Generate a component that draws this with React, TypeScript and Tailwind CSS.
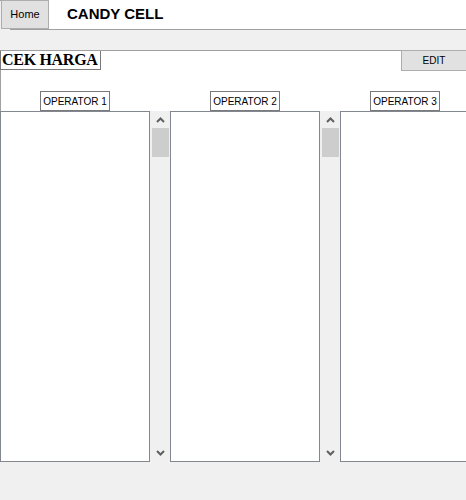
const Chevron = ({ up }: { up?: boolean }) => (
  <svg width="9" height="6" viewBox="0 0 9 6" className="block">
    {up ? (
      <path d="M1 5 L4.5 1.5 L8 5" fill="none" stroke="#606060" strokeWidth="2" />
    ) : (
      <path d="M1 1 L4.5 4.5 L8 1" fill="none" stroke="#606060" strokeWidth="2" />
    )}
  </svg>
)

function OperatorColumn({ label, last }: { label: string; last?: boolean }) {
  return (
    <div className={last ? 'flex-1 flex flex-col min-w-0' : 'w-[170px] flex flex-col shrink-0'}>
      {/* label */}
      <div className={last ? 'h-[60px] flex items-end pl-[30px]' : 'h-[60px] flex items-end justify-center pr-[20px]'}>
        <div className="w-[70px] h-[20px] border border-[#7a7a7a] bg-white flex items-center justify-center text-[10px] text-black">
          {label}
        </div>
      </div>
      {/* list + scrollbar */}
      <div className="flex h-[351px]">
        <div className={last ? 'flex-1 border border-r-0 border-[#828790] bg-white' : 'w-[150px] border border-[#828790] bg-white'} />
        {!last && (
          <div className="w-[20px] bg-[#f0f0f0] flex flex-col items-center">
            <div className="h-[17px] flex items-center justify-center pt-[1px]">
              <Chevron up />
            </div>
            <div className="w-[17px] h-[29px] bg-[#cdcdcd]" />
            <div className="flex-1" />
            <div className="h-[17px] flex items-center justify-center pb-[1px]">
              <Chevron />
            </div>
          </div>
        )}
      </div>
    </div>
  )
}

export default function App() {
  return (
    <div
      className="w-[466px] h-[500px] bg-[#f0f0f0] overflow-hidden"
      style={{ fontFamily: '"Liberation Sans", Arial, sans-serif' }}
    >
      {/* top bar */}
      <div className="flex h-[30px]">
        <div className="w-[10px] border-t border-[#a0a0a0]" />
        <div className="flex-1 bg-white border-b border-[#a0a0a0] flex items-start">
          <button className="-ml-[9px] w-[48px] h-[29px] bg-[#e1e1e1] border border-[#adadad] text-[11px] text-black flex items-center justify-center">
            Home
          </button>
          <span className="ml-[18px] mt-[6px] text-[15px] font-bold text-black leading-none">CANDY CELL</span>
        </div>
      </div>

      <div className="h-[20px]" />

      {/* main panel */}
      <div className="bg-white border-t border-l border-[#a0a0a0] h-[411px]">
        <div className="flex justify-between">
          <div
            className="w-[101px] h-[19px] -ml-px border border-t-0 border-[#7a7a7a] pl-[1px] text-[16px] font-bold text-black leading-[18px] whitespace-nowrap overflow-hidden tracking-[-0.3px]"
            style={{ fontFamily: '"Liberation Serif", "Times New Roman", serif' }}
          >
            CEK HARGA
          </div>
          <button className="w-[65px] h-[21px] -mt-px bg-[#e1e1e1] border border-r-0 border-[#adadad] text-[10px] text-black flex items-center justify-center">
            EDIT
          </button>
        </div>
        <div className="flex -ml-px -mt-[20px]">
          <OperatorColumn label="OPERATOR 1" />
          <OperatorColumn label="OPERATOR 2" />
          <OperatorColumn label="OPERATOR 3" last />
        </div>
      </div>
    </div>
  )
}
